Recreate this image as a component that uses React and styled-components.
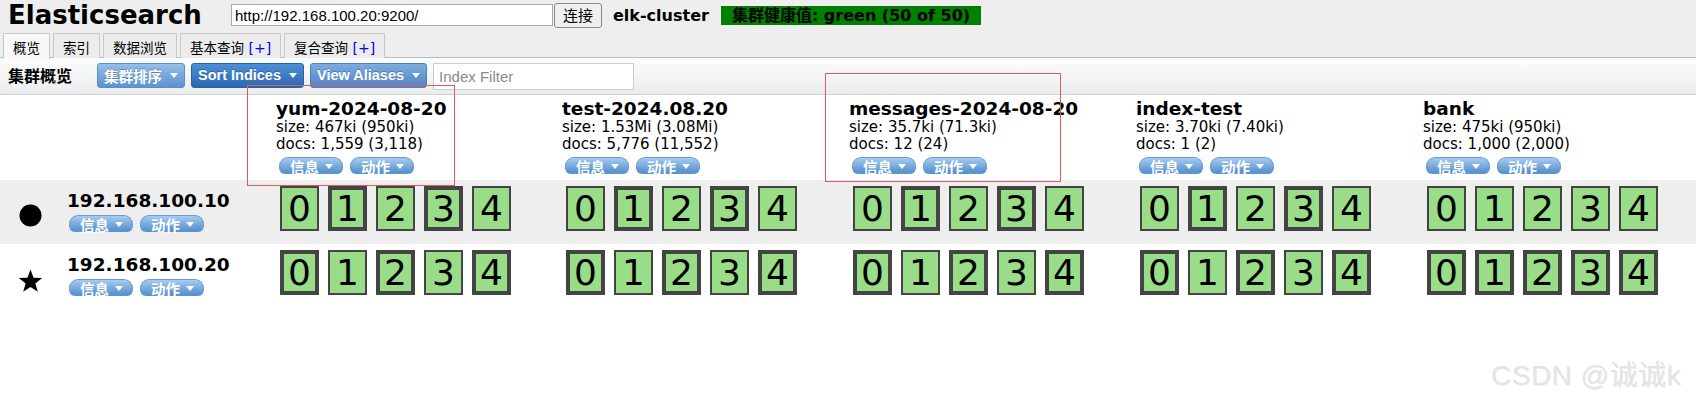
import React from "react";
import styled, { createGlobalStyle, css } from "styled-components";

const indices = [
  { name: "yum-2024-08-20", size: "467ki (950ki)", docs: "1,559 (3,118)" },
  { name: "test-2024.08.20", size: "1.53Mi (3.08Mi)", docs: "5,776 (11,552)" },
  { name: "messages-2024-08-20", size: "35.7ki (71.3ki)", docs: "12 (24)" },
  { name: "index-test", size: "3.70ki (7.40ki)", docs: "1 (2)" },
  { name: "bank", size: "475ki (950ki)", docs: "1,000 (2,000)" },
];

// primary shard numbers for each node, per index
const nodes = [
  { ip: "192.168.100.10", master: true, primaries: [[1, 3], [1, 3], [1, 3], [1, 3], []] },
  { ip: "192.168.100.20", master: false, primaries: [[0, 2, 4], [0, 2, 4], [0, 2, 4], [0, 2, 4], [0, 1, 2, 3, 4]] },
];

const tabs = ["概览", "索引", "数据浏览", "基本查询", "复合查询"];

export default function App() {
  return (
    <Page>
      <GlobalStyle />
      <Header>
        <TopBar>
          <Title>Elasticsearch</Title>
          <UriInput defaultValue="http://192.168.100.20:9200/" />
          <ConnectButton>连接</ConnectButton>
          <ClusterName>elk-cluster</ClusterName>
          <Health>集群健康值: green (50 of 50)</Health>
        </TopBar>
        <Tabs>
          {tabs.map((t, i) => (
            <Tab key={t} $active={i === 0}>
              {t}
              {i > 2 && <Plus> [+]</Plus>}
            </Tab>
          ))}
        </Tabs>
      </Header>

      <Toolbar>
        <SectionTitle>集群概览</SectionTitle>
        <MenuButton $tone="light">集群排序<Caret /></MenuButton>
        <MenuButton $tone="dark">Sort Indices<Caret /></MenuButton>
        <MenuButton $tone="mid">View Aliases<Caret /></MenuButton>
        <FilterInput placeholder="Index Filter" />
      </Toolbar>

      <Row>
        <Cell />
        {indices.map((ix) => (
          <IndexHeader key={ix.name}>
            <Name>{ix.name}</Name>
            <Stat>size: {ix.size}</Stat>
            <Stat>docs: {ix.docs}</Stat>
            <Pills>
              <Pill>信息<Caret $small /></Pill>
              <Pill>动作<Caret $small /></Pill>
            </Pills>
          </IndexHeader>
        ))}
      </Row>

      {nodes.map((n, r) => (
        <Row key={n.ip} $striped={r === 0}>
          <NodeCell>
            <NodeIcon>
              {n.master ? (
                <svg width="23" height="23" viewBox="0 0 23 23">
                  <circle cx="11.5" cy="11.5" r="11" fill="#000" />
                </svg>
              ) : (
                <svg width="27" height="26" viewBox="0 0 24 23">
                  <polygon
                    fill="#000"
                    points="12,0.5 14.9,8.3 23.2,8.6 16.7,13.8 19,21.8 12,17.2 5,21.8 7.3,13.8 0.8,8.6 9.1,8.3"
                  />
                </svg>
              )}
            </NodeIcon>
            <div>
              <Name>{n.ip}</Name>
              <Pills $node>
                <Pill>信息<Caret $small /></Pill>
                <Pill>动作<Caret $small /></Pill>
              </Pills>
            </div>
          </NodeCell>
          {indices.map((ix, c) => (
            <ShardCell key={ix.name}>
              {[0, 1, 2, 3, 4].map((s) => (
                <Shard key={s} $primary={n.primaries[c].includes(s)}>
                  {s}
                </Shard>
              ))}
            </ShardCell>
          ))}
        </Row>
      ))}

      <Marker style={{ left: 247, top: 85, width: 208, height: 101 }} />
      <Marker style={{ left: 825, top: 73, width: 236, height: 109 }} />
      <Watermark>CSDN @诚诚k</Watermark>
    </Page>
  );
}

// ---------------- Styled Components ----------------
const GlobalStyle = createGlobalStyle`
  html, body {
    margin: 0;
    padding: 0;
    background: #fff;
  }
  body {
    font-family: "DejaVu Sans", Verdana, "Noto Sans CJK SC", sans-serif;
    color: #000;
  }
`;

const Page = styled.div`
  position: relative;
  width: 1696px;
  min-height: 398px;
`;

const Header = styled.div`
  background: #eee;
`;

const TopBar = styled.div`
  display: flex;
  align-items: center;
  height: 30px;
  padding-left: 8px;
`;

const Title = styled.div`
  flex: 0 0 223px;
  font-size: 26px;
  font-weight: bold;
  line-height: 30px;
`;

const UriInput = styled.input`
  box-sizing: border-box;
  width: 322px;
  height: 22px;
  margin: 0;
  padding: 0 3px;
  border: 1px solid #a9a9a9;
  background: #fff;
  font-family: "Liberation Sans", Arial, sans-serif;
  font-size: 15px;
  color: #000;
`;

const ConnectButton = styled.button`
  box-sizing: border-box;
  width: 48px;
  height: 25px;
  margin: 0 0 0 1px;
  padding: 0;
  border: 1px solid #8a8a8a;
  border-radius: 3px;
  background: #efefef;
  font-family: "Noto Sans CJK SC", sans-serif;
  font-size: 15px;
  line-height: 22px;
  color: #000;
`;

const ClusterName = styled.div`
  margin-left: 11px;
  font-size: 16px;
  font-weight: bold;
`;

const Health = styled.div`
  margin-left: 12px;
  height: 19px;
  padding: 0 11px;
  background: #008000;
  font-family: "DejaVu Sans", "Noto Sans CJK SC", sans-serif;
  font-size: 16px;
  font-weight: bold;
  line-height: 19px;
  color: #000;
`;

const Tabs = styled.div`
  display: flex;
  gap: 3px;
  margin-top: 3px;
  padding-left: 3px;
  height: 24px;
  border-bottom: 1px solid #bbb;
`;

const Tab = styled.div`
  height: 23px;
  padding: 1px 9px 0;
  border: 1px solid #c8c8c8;
  border-bottom: none;
  background: #ececec;
  font-family: "Noto Sans CJK SC", sans-serif;
  font-size: 13.5px;
  line-height: 24px;
  color: #000;
  ${(p) =>
    p.$active &&
    css`
      height: 24px;
      background: #f8f8f8;
    `}
`;

const Plus = styled.span`
  color: #00f;
  font-family: "DejaVu Sans", sans-serif;
  font-size: 14px;
`;

const Toolbar = styled.div`
  display: flex;
  align-items: center;
  gap: 6px;
  height: 36px;
  padding-left: 8px;
  background: linear-gradient(#fdfdfd, #eaecee);
  border-bottom: 1px solid #cfcfcf;
`;

const SectionTitle = styled.div`
  flex: 0 0 83px;
  font-family: "Noto Sans CJK SC", sans-serif;
  font-size: 16px;
  font-weight: bold;
  margin-top: -2px;
`;

const tones = {
  light: ["#93bfea", "#5b92cf", "#5d8fc6"],
  dark: ["#4d8fd6", "#2a69b2", "#2a62a4"],
  mid: ["#7eacdf", "#4d85c6", "#4f80ba"],
};

const MenuButton = styled.div`
  display: flex;
  align-items: center;
  box-sizing: border-box;
  height: 25px;
  margin-top: -2px;
  padding: 0 6px;
  border: 1px solid ${(p) => tones[p.$tone][2]};
  border-radius: 3px;
  background: linear-gradient(${(p) => tones[p.$tone][0]}, ${(p) => tones[p.$tone][1]});
  font-family: "Liberation Sans", Arial, "Noto Sans CJK SC", sans-serif;
  font-size: 14.5px;
  font-weight: bold;
  color: #fff;
  text-shadow: 0 -1px 0 rgba(0, 0, 0, 0.25);
`;

const Caret = styled.span`
  display: inline-block;
  width: 0;
  height: 0;
  margin-left: ${(p) => (p.$small ? 6 : 8)}px;
  border-left: 4px solid transparent;
  border-right: 4px solid transparent;
  border-top: 5px solid #fff;
`;

const FilterInput = styled.input`
  box-sizing: border-box;
  width: 201px;
  height: 27px;
  margin: 0;
  padding: 0 5px;
  border: 1px solid #ccc;
  background: #fff;
  font-family: "Liberation Sans", Arial, sans-serif;
  font-size: 15px;
  &::placeholder {
    color: #8a8a8a;
  }
`;

const Row = styled.div`
  display: grid;
  grid-template-columns: 272px 286px 287px 287px 287px 268px;
  height: ${(p) => (p.$striped === undefined ? 85 : 64)}px;
  background: ${(p) => (p.$striped ? "#eee" : "transparent")};
`;

const Cell = styled.div``;

const IndexHeader = styled.div`
  padding: 4px 0 0 4px;
`;

const Name = styled.div`
  font-size: 18.5px;
  font-weight: bold;
  line-height: 20px;
  white-space: nowrap;
`;

const Stat = styled.div`
  font-size: 15px;
  line-height: 17px;
  white-space: nowrap;
`;

const Pills = styled.div`
  display: flex;
  gap: 7px;
  margin-top: 4px;
  margin-left: ${(p) => (p.$node ? 2 : 3)}px;
`;

const Pill = styled.div`
  display: flex;
  align-items: center;
  box-sizing: border-box;
  height: 17px;
  padding: 1px 9px 0 10px;
  border: 1px solid #6b9bd0;
  border-bottom: none;
  border-radius: 9px 9px 6px 6px;
  background: linear-gradient(#a6cbf0, #5a94d1 85%);
  font-family: "Noto Sans CJK SC", sans-serif;
  font-size: 14.5px;
  font-weight: bold;
  color: #fff;
  line-height: 16px;
`;

const NodeCell = styled.div`
  display: flex;
  align-items: flex-start;
  padding-top: 11px;
`;

const NodeIcon = styled.div`
  display: flex;
  justify-content: center;
  width: 25px;
  margin: 13px 24px 0 18px;
`;

const ShardCell = styled.div`
  display: flex;
  gap: 9px;
  padding: 6px 0 0 8px;
`;

const Shard = styled.div`
  display: flex;
  align-items: center;
  justify-content: center;
  box-sizing: border-box;
  width: 39px;
  height: 45px;
  border: ${(p) => (p.$primary ? 4 : 2)}px solid #444;
  background: #99dd88;
  font-size: 36px;
  line-height: 1;
  color: #000;
`;

const Marker = styled.div`
  position: absolute;
  box-sizing: border-box;
  border: 1.5px solid #e25a5a;
  pointer-events: none;
`;

const Watermark = styled.div`
  position: absolute;
  left: 1491px;
  top: 353px;
  font-family: "Liberation Sans", Arial, "Noto Sans CJK SC", sans-serif;
  font-size: 28px;
  letter-spacing: 0.5px;
  font-weight: normal;
  color: #e4e4e4;
  text-shadow: 1px 1px 0 rgba(0, 0, 0, 0.08);
  white-space: nowrap;
`;
